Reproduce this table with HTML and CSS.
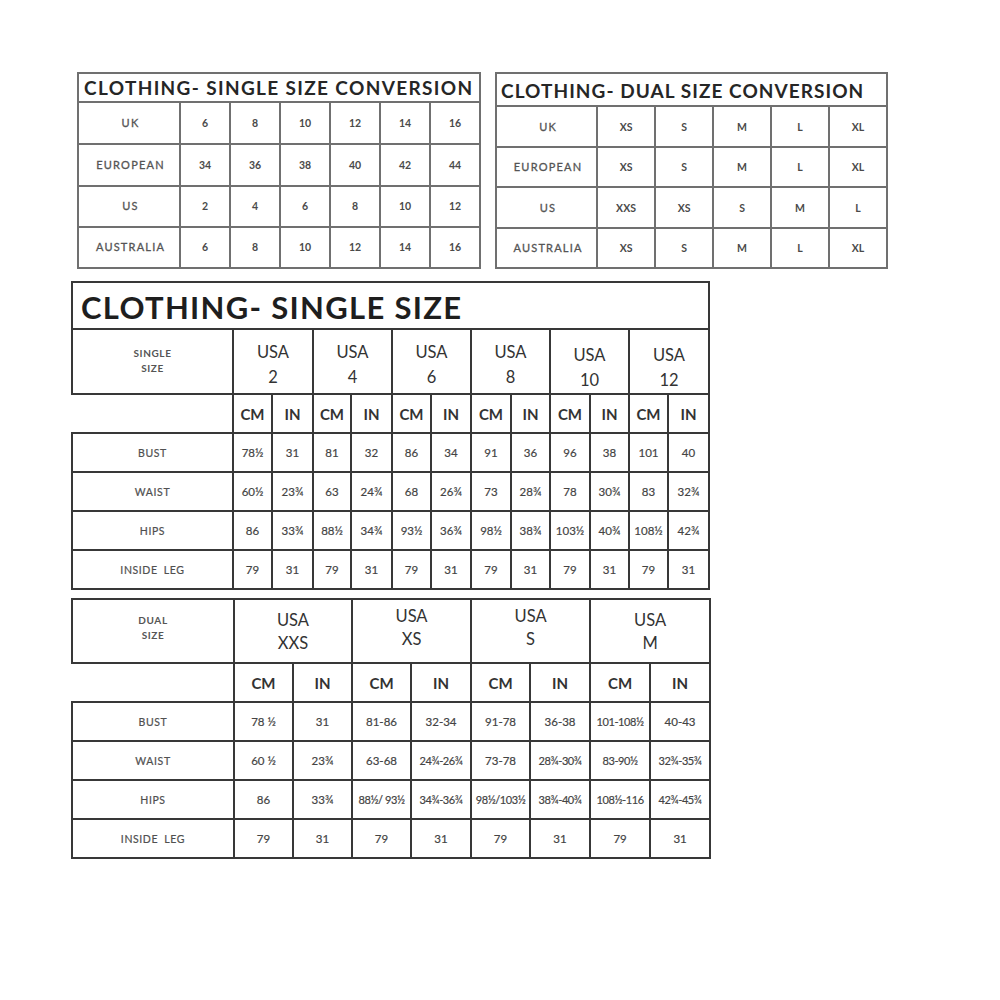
FILE: index.html
```html
<!DOCTYPE html>
<html>
<head>
<meta charset="utf-8">
<link rel="stylesheet" href="styles.css">
</head>
<body>
<div class="page">
  <div class="top">
    <table class="conv conv-single">
      <colgroup><col class="c-lab1"><col class="c-n"><col class="c-n"><col class="c-n"><col class="c-n"><col class="c-n"><col class="c-n"></colgroup>
      <tr class="t-title t-title1"><th colspan="7">CLOTHING- SINGLE SIZE CONVERSION</th></tr>
      <tr class="a1"><td class="lab">UK</td><td>6</td><td>8</td><td>10</td><td>12</td><td>14</td><td>16</td></tr>
      <tr class="a2"><td class="lab">EUROPEAN</td><td>34</td><td>36</td><td>38</td><td>40</td><td>42</td><td>44</td></tr>
      <tr class="a2"><td class="lab">US</td><td>2</td><td>4</td><td>6</td><td>8</td><td>10</td><td>12</td></tr>
      <tr class="a2"><td class="lab">AUSTRALIA</td><td>6</td><td>8</td><td>10</td><td>12</td><td>14</td><td>16</td></tr>
    </table>
    <table class="conv conv-dual">
      <colgroup><col class="c-lab2"><col class="c-d"><col class="c-d"><col class="c-d"><col class="c-d"><col class="c-d"></colgroup>
      <tr class="t-title t-title2"><th colspan="6">CLOTHING- DUAL SIZE CONVERSION</th></tr>
      <tr class="b1"><td class="lab">UK</td><td>XS</td><td>S</td><td>M</td><td>L</td><td>XL</td></tr>
      <tr class="b2"><td class="lab">EUROPEAN</td><td>XS</td><td>S</td><td>M</td><td>L</td><td>XL</td></tr>
      <tr class="b1"><td class="lab">US</td><td>XXS</td><td>XS</td><td>S</td><td>M</td><td>L</td></tr>
      <tr class="b2"><td class="lab">AUSTRALIA</td><td>XS</td><td>S</td><td>M</td><td>L</td><td>XL</td></tr>
    </table>
  </div>

  <table class="size size-single">
    <colgroup>
      <col class="s-lab">
      <col style="width:39px"><col style="width:41px"><col style="width:38px"><col style="width:41px">
      <col style="width:39px"><col style="width:40px"><col style="width:40px"><col style="width:39px">
      <col style="width:40px"><col style="width:39px"><col style="width:39px"><col style="width:41px">
    </colgroup>
    <tr class="big-title"><th colspan="13">CLOTHING- SINGLE SIZE</th></tr>
    <tr class="head shead">
      <td class="kind">SINGLE<br>SIZE</td>
      <td colspan="2" class="usa">USA<br>2</td>
      <td colspan="2" class="usa">USA<br>4</td>
      <td colspan="2" class="usa">USA<br>6</td>
      <td colspan="2" class="usa">USA<br>8</td>
      <td colspan="2" class="usa low">USA<br>10</td>
      <td colspan="2" class="usa low">USA<br>12</td>
    </tr>
    <tr class="units">
      <td class="blank"></td>
      <td>CM</td><td>IN</td><td>CM</td><td>IN</td><td>CM</td><td>IN</td>
      <td>CM</td><td>IN</td><td>CM</td><td>IN</td><td>CM</td><td>IN</td>
    </tr>
    <tr class="data"><td class="lab">BUST</td><td>78½</td><td>31</td><td>81</td><td>32</td><td>86</td><td>34</td><td>91</td><td>36</td><td>96</td><td>38</td><td>101</td><td>40</td></tr>
    <tr class="data"><td class="lab">WAIST</td><td>60½</td><td>23¾</td><td>63</td><td>24¾</td><td>68</td><td>26¾</td><td>73</td><td>28¾</td><td>78</td><td>30¾</td><td>83</td><td>32¾</td></tr>
    <tr class="data"><td class="lab">HIPS</td><td>86</td><td>33¾</td><td>88½</td><td>34¾</td><td>93½</td><td>36¾</td><td>98½</td><td>38¾</td><td>103½</td><td>40¾</td><td>108½</td><td>42¾</td></tr>
    <tr class="data"><td class="lab">INSIDE LEG</td><td>79</td><td>31</td><td>79</td><td>31</td><td>79</td><td>31</td><td>79</td><td>31</td><td>79</td><td>31</td><td>79</td><td>31</td></tr>
  </table>

  <table class="size size-dual">
    <colgroup>
      <col class="d-lab">
      <col style="width:59px"><col style="width:59px"><col style="width:59px"><col style="width:60px">
      <col style="width:59px"><col style="width:60px"><col style="width:60px"><col style="width:60px">
    </colgroup>
    <tr class="head dhead">
      <td class="kind">DUAL<br>SIZE</td>
      <td colspan="2" class="usa">USA<br>XXS</td>
      <td colspan="2" class="usa up">USA<br>XS</td>
      <td colspan="2" class="usa up">USA<br>S</td>
      <td colspan="2" class="usa">USA<br>M</td>
    </tr>
    <tr class="units">
      <td class="blank"></td>
      <td>CM</td><td>IN</td><td>CM</td><td>IN</td><td>CM</td><td>IN</td><td>CM</td><td>IN</td>
    </tr>
    <tr class="data"><td class="lab">BUST</td><td>78 ½</td><td>31</td><td>81-86</td><td>32-34</td><td>91-78</td><td>36-38</td><td class="tight">101-108½</td><td>40-43</td></tr>
    <tr class="data"><td class="lab">WAIST</td><td>60 ½</td><td>23¾</td><td>63-68</td><td class="tight">24¾-26¾</td><td>73-78</td><td class="tight">28¾-30¾</td><td class="tight">83-90½</td><td class="tight">32¾-35¾</td></tr>
    <tr class="data"><td class="lab">HIPS</td><td>86</td><td>33¾</td><td class="tight">88½/ 93½</td><td class="tight">34¾-36¾</td><td class="tight">98½/103½</td><td class="tight">38¾-40¾</td><td class="tight">108½-116</td><td class="tight">42¾-45¾</td></tr>
    <tr class="data"><td class="lab">INSIDE LEG</td><td>79</td><td>31</td><td>79</td><td>31</td><td>79</td><td>31</td><td>79</td><td>31</td></tr>
  </table>
</div>
</body>
</html>
```

FILE: styles.css
```css
html, body {
  margin: 0;
  padding: 0;
  background: #ffffff;
}

body {
  font-family: Lato, "Noto Sans", "DejaVu Sans", sans-serif;
  color: #444;
}

.page {
  padding: 72px 0 0 70px;
  display: flex;
  flex-direction: column;
  align-items: flex-start;
}

.top {
  display: flex;
  gap: 14px;
  margin-left: 7px;
}

table {
  border-collapse: collapse;
  table-layout: fixed;
}

td, th {
  padding: 0;
  text-align: center;
  vertical-align: middle;
  white-space: nowrap;
  overflow: hidden;
  line-height: 14px;
}

/* ---------- top conversion tables ---------- */
.conv td, .conv th {
  border: 2px solid #707070;
}

.conv-single { width: 403px; }
.conv-dual { width: 392px; }

.c-lab1 { width: 102px; }
.c-n { width: 50px; }
.c-lab2 { width: 101px; }
.c-d { width: 58px; }

.t-title th {
  height: 27px;
  text-align: left;
  padding-left: 5px;
  font-size: 19px;
  line-height: 22px;
  font-weight: 700;
  color: #262626;
}

.t-title1 th {
  letter-spacing: 1.35px;
}

.t-title2 th {
  height: 29px;
  padding-top: 2px;
  padding-left: 4px;
  letter-spacing: 1.05px;
}

.conv .a1 td { height: 40px; }
.conv .a2 td { height: 39px; }
.conv .b1 td { height: 39px; }
.conv .b2 td { height: 38px; }

.conv td {
  font-size: 10.5px;
  font-weight: 700;
  color: #4a4a4a;
}

.conv td.lab {
  font-size: 11px;
  font-weight: 400;
  color: #555;
  letter-spacing: 1.2px;
  padding-left: 3px;
  -webkit-text-stroke: 0.3px #555;
}

/* ---------- size tables ---------- */
.size td, .size th {
  border: 2px solid #383838;
}

.size-single {
  width: 637px;
  margin-top: 12px;
  margin-left: 1px;
}

.size-dual {
  width: 638px;
  margin-top: 8px;
  margin-left: 1px;
}

.s-lab { width: 161px; }
.d-lab { width: 162px; }

.big-title th {
  height: 43px;
  text-align: left;
  padding-left: 8px;
  padding-top: 2px;
  font-size: 31px;
  line-height: 36px;
  font-weight: 700;
  color: #1e1e1e;
  letter-spacing: 1.3px;
}

.kind {
  vertical-align: top;
  font-size: 10px;
  line-height: 15px;
  font-weight: 700;
  color: #555;
  letter-spacing: 0.6px;
}

.usa {
  font-size: 16.5px;
  line-height: 25px;
  font-weight: 400;
  color: #333;
  vertical-align: top;
}

.shead .kind { padding-top: 16px; height: 47px; }
.shead .usa { padding-top: 10px; height: 53px; }
.shead .usa.low { padding-top: 13px; height: 50px; }

.dhead .usa { line-height: 23px; }
.dhead .kind { padding-top: 13px; height: 49px; }
.dhead .usa { padding-top: 9px; height: 53px; }
.dhead .usa.up { padding-top: 5px; height: 57px; }

.units td {
  height: 37px;
  font-size: 15px;
  font-weight: 700;
  color: #333;
}

.units td.blank {
  border-left: none;
}

.data td {
  height: 37px;
  font-size: 11.5px;
  font-weight: 400;
  color: #444;
  -webkit-text-stroke: 0.2px #444;
}

.data td.lab {
  font-size: 10.5px;
  color: #555;
  letter-spacing: 0.6px;
  word-spacing: 3px;
}

.data td.tight {
  font-size: 11px;
  letter-spacing: -0.4px;
}
```
